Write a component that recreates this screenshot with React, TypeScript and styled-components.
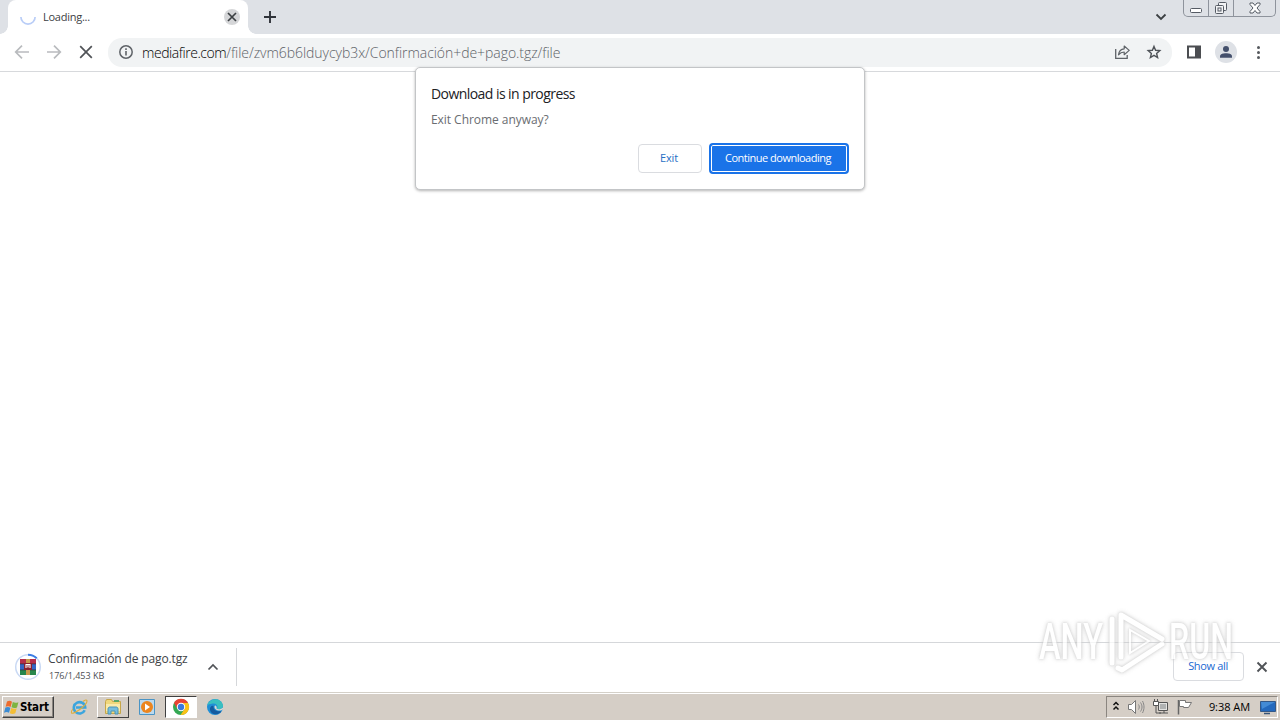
import type { ReactNode } from "react";
import styled, { createGlobalStyle } from "styled-components";

const GlobalStyle = createGlobalStyle`
  * {
    box-sizing: border-box;
  }

  body {
    margin: 0;
    overflow: hidden;
    background: #fff;
    font-family: "Open Sans", "Noto Sans", sans-serif;
  }

  button {
    padding: 0;
    border: 0;
    background: none;
    font-family: inherit;
  }

  svg {
    display: block;
    flex: none;
  }
`;

interface IconProps {
  width?: number;
  height?: number;
  children: ReactNode;
}
const Icon = ({ width = 16, height = 16, children }: IconProps) => (
  <svg
    width={width}
    height={height}
    viewBox={`0 0 ${width} ${height}`}
    fill="none"
    aria-hidden="true"
  >
    {children}
  </svg>
);

const TabStrip = () => (
  <S.TabStrip>
    <S.Tab>
      <Icon>
        <path d="M.9 8a7.1 7.1 0 0 0 14.2 0" stroke="#b9cdf7" strokeWidth="1.7" />
      </Icon>
      <S.TabTitle>Loading...</S.TabTitle>
      <S.TabClose aria-label="Close tab">
        <Icon>
          <path d="M4 4l8 8M12 4l-8 8" stroke="#3c4043" strokeWidth="1.7" />
        </Icon>
      </S.TabClose>
    </S.Tab>
    <S.NewTab aria-label="New tab">
      <Icon>
        <path d="M8 2v12M2 8h12" stroke="#30333a" strokeWidth="1.9" />
      </Icon>
    </S.NewTab>
    <S.TabSearch aria-label="Search tabs">
      <Icon width={12} height={12}>
        <path d="M1.5 3.500l4.5 4.5L10.500 3.500" stroke="#3c4043" strokeWidth="1.8" />
      </Icon>
    </S.TabSearch>
    <S.WindowButtons>
      <S.WindowButton $width={24} aria-label="Minimize">
        <Icon width={14} height={7}>
          <rect x="1.500" y="1.500" width="11" height="4" rx="1" fill="#fff" stroke="#555b64" />
        </Icon>
      </S.WindowButton>
      <S.WindowButton $width={25} aria-label="Restore">
        <Icon width={14} height={14}>
          <rect x="4.500" y="1.500" width="8" height="8" rx="1" fill="#f2f3f5" stroke="#555b64" />
          <rect x="1.500" y="4.500" width="8" height="8" rx="1" fill="#f2f3f5" stroke="#555b64" />
          <rect x="4" y="7" width="3" height="3" stroke="#555b64" />
        </Icon>
      </S.WindowButton>
      <S.WindowButton $width={42} aria-label="Close">
        <Icon width={14} height={12}>
          <path
            d="M2 1h3L7 3.500 9 1h3v1.500L9 6l3 3.500V11H9L7 8.500 5 11H2V9.500L5 6 2 2.500z"
            fill="#fff"
            stroke="#555b64"
          />
        </Icon>
      </S.WindowButton>
    </S.WindowButtons>
  </S.TabStrip>
);

const Toolbar = () => (
  <S.Toolbar>
    <S.NavButtons>
      <Icon>
        <path d="M15 8H2M8 1.700L1.700 8 8 14.300" stroke="#b9bbbe" strokeWidth="1.700" />
      </Icon>
      <Icon>
        <path d="M1 8h13M8 1.700L14.300 8 8 14.300" stroke="#b9bbbe" strokeWidth="1.700" />
      </Icon>
      <Icon>
        <path d="M2.200 2.200l11.600 11.600M13.800 2.200L2.200 13.800" stroke="#505357" strokeWidth="1.700" />
      </Icon>
    </S.NavButtons>
    <S.Omnibox>
      <Icon>
        <circle cx="8" cy="8" r="6.200" stroke="#5f6368" strokeWidth="1.500" />
        <path d="M8 7v4.500M8 4.300V6" stroke="#5f6368" strokeWidth="1.600" />
      </Icon>
      <S.Url>
        <b>mediafire.com</b>/file/zvm6b6lduycyb3x/Confirmación+de+pago.tgz/file
      </S.Url>
      <Icon>
        <path d="M1.700 5v9.300h11.500V11" stroke="#5f6368" strokeWidth="1.300" />
        <path
          d="M4.500 10.800C5 7 7.200 5 10.200 4.800V2l5 4.400-5 4.300V8C7.700 8 6 8.900 4.500 10.800z"
          stroke="#5f6368"
          strokeWidth="1.200"
          strokeLinejoin="round"
        />
      </Icon>
      <Icon>
        <path
          d="M8 2.400l1.600 3.900 4.200.3-3.200 2.800 1 4.100L8 11.300l-3.600 2.200 1-4.100-3.200-2.800 4.200-.3z"
          stroke="#4f5358"
          strokeWidth="1.400"
        />
      </Icon>
    </S.Omnibox>
    <S.SidePanel aria-label="Side panel">
      <Icon>
        <path d="M1 1.500h14v13H1zM3 3.500v9h6v-9z" fill="#4b4d51" fillRule="evenodd" />
      </Icon>
    </S.SidePanel>
    <S.Avatar>
      <Icon>
        <circle cx="8" cy="5" r="3" fill="#44506c" />
        <path d="M2 13.700v-1.400C2 10 5 9.200 8 9.200s6 .8 6 3.100v1.400z" fill="#44506c" />
      </Icon>
    </S.Avatar>
    <Icon>
      <circle cx="8.500" cy="2.500" r="1.500" fill="#55585d" />
      <circle cx="8.500" cy="7.500" r="1.500" fill="#55585d" />
      <circle cx="8.500" cy="12.500" r="1.500" fill="#55585d" />
    </Icon>
  </S.Toolbar>
);

const ExitDialog = () => (
  <S.Dialog role="dialog">
    <S.DialogTitle>Download is in progress</S.DialogTitle>
    <S.DialogText>Exit Chrome anyway?</S.DialogText>
    <S.DialogActions>
      <S.DialogButton>Exit</S.DialogButton>
      <S.DialogButton $primary>Continue downloading</S.DialogButton>
    </S.DialogActions>
  </S.Dialog>
);

const ArchiveIcon = () => (
  <Icon width={28} height={28}>
    <circle cx="14" cy="14" r="12.300" stroke="#c9d9f4" strokeWidth="1.500" />
    <path d="M14 1.700a12.300 12.300 0 0 1 8.700 3.600" stroke="#3c7ce4" strokeWidth="2" />
    <path d="M6 6h16v5H6z" fill="#b52d4b" />
    <path d="M6 11h16v6H6z" fill="#3565c5" />
    <path d="M6 17h16v5H6z" fill="#27864c" />
    <path d="M6 10.900h16M6 16.900h16" stroke="#342b35" strokeWidth=".7" />
    <path d="M12 6h4v16h-4z" fill="#c9984c" />
    <path d="M10 10h8v7h-8z" fill="#8a2131" />
    <path d="M12 15v-3.500h4V15M14 12v2.500" stroke="#fff" strokeWidth="1.100" />
  </Icon>
);

const DownloadShelf = () => (
  <S.Shelf>
    <S.Download>
      <ArchiveIcon />
      <S.FileInfo>
        <S.FileName>Confirmación de pago.tgz</S.FileName>
        <S.FileSize>176/1,453 KB</S.FileSize>
      </S.FileInfo>
      <Icon width={12} height={12}>
        <path d="M1.500 8.500L6 4l4.500 4.500" stroke="#505357" strokeWidth="1.700" />
      </Icon>
    </S.Download>
    <S.ShowAll>Show all</S.ShowAll>
    <Icon width={12} height={12}>
      <path d="M1.500 1.500l9 9M10.500 1.500l-9 9" stroke="#505357" strokeWidth="1.900" />
    </Icon>
  </S.Shelf>
);

const WindowsLogo = () => (
  <Icon width={17} height={17}>
    <path d="M4 2.500c2-1 3.500-.8 5 .2L7.600 8C6 7 4.500 7 2.600 7.800z" fill="#ec6b2d" />
    <path d="M9.800 3.100c2 1 3.600 1 5.600.1L14 8.400c-2 .9-3.700.8-5.500-.1z" fill="#7db442" />
    <path d="M2.400 8.600c1.900-.9 3.400-.7 5 .2L6 13.800c-1.500-.9-3-1.100-5 0z" fill="#3b8bd3" />
    <path d="M8.200 9.100c1.900.9 3.500 1 5.500.2l-1.400 5c-2 .9-3.700.8-5.500-.1z" fill="#f3bd35" />
  </Icon>
);

const Taskbar = () => (
  <S.Taskbar>
    <S.Start>
      <WindowsLogo />
      Start
    </S.Start>
    <S.TaskItem $state="idle" aria-label="Internet Explorer">
      <Icon width={18} height={18}>
        <path d="M14.700 12.200A5.700 5.700 0 1 1 15.200 9.500H6" stroke="#3ba5de" strokeWidth="2.600" />
        <path
          d="M13 3.500c2-1.700 4-2 4-.5.200 2-3.800 6-8 9-4 2.800-7 4-7.600 2.700-.4-.8.400-2.200 1.400-3.500"
          stroke="#dcae3d"
          strokeWidth="1.100"
        />
      </Icon>
    </S.TaskItem>
    <S.TaskItem $state="raised" aria-label="Explorer">
      <Icon width={18} height={18}>
        <path d="M1.500 3.500l1-2h5l1 2h8v12h-15z" fill="#efd77c" stroke="#c7a648" />
        <path d="M2 6h14v7H2z" fill="#f9eaaa" />
        <path d="M4 16v-5c0-1.500 1-2 2-2h6c1 0 2 .5 2 2v5h-3v-3H7v3z" fill="#76bddd" stroke="#4a94b6" />
        <path d="M10 3h5" stroke="#58a667" strokeWidth="2" />
      </Icon>
    </S.TaskItem>
    <S.TaskItem $state="idle" aria-label="Media Player">
      <Icon width={18} height={18}>
        <path d="M1.500 1.500h15v15h-15z" fill="#bcd9ed" stroke="#4a94c5" />
        <circle cx="9" cy="9" r="6" fill="#ec851e" />
        <path d="M7 5.500v7l5-3.500z" fill="#fff" />
      </Icon>
    </S.TaskItem>
    <S.TaskItem $state="active" aria-label="Chrome">
      <Icon width={18} height={18}>
        <circle cx="9" cy="9" r="8" fill="#34a853" />
        <path d="M2 5a8 8 0 0 1 14 0H9l-3.500 6z" fill="#e84335" />
        <path d="M16 5a8 8 0 0 1-7.500 12l4-6V7L9 5z" fill="#fbc116" />
        <circle cx="9" cy="9" r="4.200" fill="#fff" />
        <circle cx="9" cy="9" r="3.200" fill="#3979dd" />
      </Icon>
    </S.TaskItem>
    <S.TaskItem $state="idle" aria-label="Edge">
      <Icon width={18} height={18}>
        <circle cx="9" cy="9" r="8" fill="#1f8ed6" />
        <path d="M1.200 7.500C3 0 14.500-1.500 17 7c.5 4-4 5-6.200 3.800 2-2.300-.4-6-4.200-5.300C4 6 2 6.500 1.200 7.500z" fill="#39bfc0" />
        <path d="M7.500 8C7 11.500 10 14 15.500 13.200 12 18 5 17 4 12c-.5-2.500 1.500-4.700 3.500-4z" fill="#155a9f" />
        <path d="M9 7.500c-1.300 1.500 0 4.500 3.500 5 2.200.2 3.400-.4 4.500-1.200V9.500C15 11.500 12 11.700 10.500 10.500 11.200 9.500 10.500 7.500 9 7.500z" fill="#d9d8d3" />
      </Icon>
    </S.TaskItem>
    <S.Tray>
      <Icon width={8} height={14}>
        <path d="M1.500 5L4 2.500 6.500 5M1.500 9.500L4 7l2.500 2.500" stroke="#111" strokeWidth="1.500" />
      </Icon>
      <Icon width={18} height={16}>
        <path d="M1.500 5.500h3l4-4v13l-4-4h-3z" fill="#fff" stroke="#777" />
        <path d="M11.500 5.500c1 1.700 1 3.300 0 5M13.500 3.500c2 3 2 6 0 9M15.500 2c2 4 2 8 0 12" stroke="#888" />
      </Icon>
      <Icon width={17} height={16}>
        <path d="M6.500 3.500h9v8h-9z" fill="#e3e3e1" stroke="#555" />
        <path d="M8 5h6v5H8z" fill="#b0b2b2" />
        <path d="M7 14h9M12 12v2M4 7v7h5" stroke="#555" />
        <path d="M1.500 2.500h5v4h-5zM2.500 0v2M5.500 0v2" fill="#fff" stroke="#555" />
      </Icon>
      <Icon width={17} height={16}>
        <path d="M2.500 1v14.500" stroke="#666" strokeWidth="1.500" />
        <path d="M3.500 1.500h6v2h6l-3 5h-5v-1h-4z" fill="#fff" stroke="#777" />
      </Icon>
      <S.Clock>9:38 AM</S.Clock>
      <Icon width={17} height={15}>
        <path d="M1.500 1.500h15v10h-15z" fill="#2469bd" stroke="#345887" />
        <path d="M2 2h14L3 9z" fill="#448bd5" />
        <path d="M5 13.500h6" stroke="#365377" strokeWidth="1.500" />
      </Icon>
    </S.Tray>
  </S.Taskbar>
);

const Watermark = () => (
  <S.Watermark>
    <svg width="206" height="76" viewBox="0 0 206 76" fill="none">
      <g fill="#fff">
        <text x="5" y="52" textLength="64" lengthAdjust="spacingAndGlyphs">
          ANY
        </text>
        <text x="135" y="52" textLength="64" lengthAdjust="spacingAndGlyphs">
          RUN
        </text>
      </g>
      <g stroke="#fff" strokeWidth="5" strokeLinecap="round" strokeLinejoin="round">
        <path d="M78 12v44" />
        <path d="M87 50V8l41 24" />
        <path d="M84 61l4 2 40-26" />
      </g>
      <path d="M96 23v23l19-12z" stroke="#fff" strokeWidth="2" />
    </svg>
  </S.Watermark>
);

const App = () => (
  <S.Desktop>
    <GlobalStyle />
    <TabStrip />
    <Toolbar />
    <S.Page />
    <DownloadShelf />
    <Taskbar />
    <ExitDialog />
    <Watermark />
  </S.Desktop>
);

namespace S {
  export const Desktop = styled.div`
    position: relative;
    display: flex;
    flex-direction: column;
    width: 1280px;
    height: 720px;
    overflow: hidden;
    background: #fff;
    white-space: nowrap;
  `;

  export const TabStrip = styled.div`
    display: flex;
    height: 34px;
    padding-left: 8px;
    background: #dee1e6;
  `;

  export const Tab = styled.div`
    position: relative;
    display: flex;
    align-items: center;
    width: 240px;
    padding: 0 8px 0 12px;
    border-radius: 8px 8px 0 0;
    background: #fff;

    &::before,
    &::after {
      content: "";
      position: absolute;
      bottom: 0;
      width: 8px;
      height: 8px;
    }

    &::before {
      left: -8px;
      background: radial-gradient(circle at 0 0, #dee1e6 7.5px, #fff 8px);
    }

    &::after {
      right: -8px;
      background: radial-gradient(circle at 100% 0, #dee1e6 7.5px, #fff 8px);
    }
  `;

  export const TabTitle = styled.span`
    margin-left: 7px;
    padding-bottom: 2px;
    color: #3c4043;
    font-size: 11px;
    letter-spacing: -0.25px;
  `;

  export const TabClose = styled.button`
    margin-left: auto;
    border-radius: 50%;
    background: #d5d6d8;
  `;

  export const NewTab = styled.button`
    margin-left: 14px;
  `;

  export const TabSearch = styled.button`
    margin-left: auto;
    margin-right: 16px;
  `;

  export const WindowButtons = styled.div`
    display: flex;
    height: 17px;
    margin-right: 4px;
    border: 1px solid #8e939c;
    border-top: 0;
    border-radius: 0 0 5px 5px;
  `;

  export const WindowButton = styled.button<{ $width: number }>`
    display: flex;
    align-items: center;
    justify-content: center;
    width: ${(props) => props.$width}px;

    & + & {
      border-left: 1px solid #8e939c;
    }

    &:first-child {
      padding-top: 5px;
    }
  `;

  export const Toolbar = styled.div`
    display: flex;
    align-items: center;
    height: 38px;
    padding: 0 14px;
    border-bottom: 1px solid #d7d9dc;
    background: #fff;
  `;

  export const NavButtons = styled.div`
    display: flex;
    gap: 16px;
    padding-bottom: 1px;
  `;

  export const Omnibox = styled.div`
    display: flex;
    flex: 1;
    align-items: center;
    gap: 16px;
    height: 29px;
    margin-left: 14px;
    padding: 0 10px 1px;
    border-radius: 14px;
    background: #f1f3f4;
  `;

  export const Url = styled.span`
    flex: 1;
    margin-left: -8px;
    color: #5d6267;
    font-size: 14px;
    font-weight: 300;
    letter-spacing: -0.05px;

    b {
      color: #000;
      font-weight: 300;
      letter-spacing: -0.45px;
    }
  `;

  export const SidePanel = styled.button`
    margin: 0 13px 0 14px;
    padding-bottom: 1px;
  `;

  export const Avatar = styled.span`
    display: flex;
    align-items: center;
    justify-content: center;
    width: 22px;
    height: 22px;
    margin: 0 13px 1px 0;
    border-radius: 50%;
    background: #dee1e6;
  `;

  export const Page = styled.main`
    flex: 1;
    background: #fff;
  `;

  export const Dialog = styled.section`
    position: absolute;
    top: 67px;
    left: 415px;
    width: 450px;
    height: 123px;
    padding: 17px 16px 0;
    border: 1px solid #c3c5c7;
    border-radius: 5px;
    background: #fff;
    box-shadow: 0 1px 3px rgba(0, 0, 0, 0.3);
  `;

  export const DialogTitle = styled.h1`
    margin: 0 0 0 -1px;
    color: #202124;
    font-size: 14px;
    font-weight: 400;
    line-height: 18px;
    letter-spacing: -0.56px;
  `;

  export const DialogText = styled.p`
    margin: 8px 0 15px -1px;
    color: #6a6d71;
    font-size: 12px;
    line-height: 17px;
    letter-spacing: -0.05px;
  `;

  export const DialogActions = styled.div`
    display: flex;
    align-items: center;
    justify-content: flex-end;
    gap: 7px;
    height: 31px;
    margin-right: -1px;
  `;

  export const DialogButton = styled.button<{ $primary?: boolean }>`
    width: ${(props) => (props.$primary ? "140px" : "64px")};
    height: ${(props) => (props.$primary ? "31px" : "29px")};
    padding: 0 2px 2px 0;
    border: ${(props) =>
      props.$primary ? "2px solid #1a73e8" : "1px solid #dadce0"};
    border-radius: 4px;
    background: ${(props) => (props.$primary ? "#1a73e8" : "#fff")};
    box-shadow: ${(props) => (props.$primary ? "inset 0 0 0 1px #fff" : "none")};
    color: ${(props) => (props.$primary ? "#fff" : "#286fc4")};
    font-size: 11px;
    letter-spacing: ${(props) => (props.$primary ? "-0.5px" : "-0.2px")};
  `;

  export const Shelf = styled.footer`
    display: flex;
    align-items: center;
    height: 50px;
    padding: 0 12px 2px 0;
    border-top: 1px solid #d5d7da;
    background: #fff;
  `;

  export const Download = styled.div`
    display: flex;
    align-items: center;
    width: 237px;
    height: 38px;
    padding: 0 17px 0 14px;
    border-right: 1px solid #d5d7da;
  `;

  export const FileInfo = styled.div`
    display: flex;
    flex: 1;
    flex-direction: column;
    margin-left: 6px;
  `;

  export const FileName = styled.span`
    color: #404347;
    font-size: 12px;
    line-height: 17px;
    letter-spacing: -0.14px;
  `;

  export const FileSize = styled.span`
    padding-left: 1px;
    color: #4c4f53;
    font-size: 9px;
    line-height: 17px;
  `;

  export const ShowAll = styled.button`
    width: 71px;
    height: 29px;
    margin: 0 12px 0 auto;
    padding: 0 1px 3px 0;
    border: 1px solid #dadce0;
    border-radius: 4px;
    color: #1a68d1;
    font-size: 11px;
    letter-spacing: -0.35px;
  `;

  export const Taskbar = styled.div`
    display: flex;
    align-items: center;
    height: 28px;
    padding: 2px 2px 1px;
    border-top: 1px solid #d4d0c8;
    box-shadow: inset 0 1px #fff;
    background: #d5cec6;
  `;

  export const Start = styled.button`
    display: flex;
    align-items: center;
    width: 52px;
    height: 22px;
    margin-right: 8px;
    border: 1px solid;
    border-color: #fff #404040 #404040 #fff;
    box-shadow: inset -1px -1px #8b8680;
    color: #000;
    font-family: "DejaVu Sans Condensed", "DejaVu Sans", sans-serif;
    font-size: 11.5px;
    font-weight: 700;
    letter-spacing: -0.15px;
  `;

  export const TaskItem = styled.button<{ $state: "idle" | "raised" | "active" }>`
    display: flex;
    align-items: center;
    justify-content: center;
    width: 32px;
    height: 22px;
    margin: 0 1px;
    border: 1px solid transparent;
    border-color: ${(props) =>
      ({
        idle: "transparent",
        raised: "#fff #404040 #404040 #fff",
        active: "#404040 #fff #fff #404040",
      })[props.$state]};
    background: ${(props) => (props.$state === "active" ? "#fff" : "none")};
  `;

  export const Tray = styled.div`
    display: flex;
    align-items: center;
    gap: 7px;
    width: 172px;
    height: 22px;
    margin-left: auto;
    padding: 0 1px 0 5px;
    border: 1px solid;
    border-color: #8b8680 #fff #fff #8b8680;
  `;

  export const Clock = styled.span`
    flex: 1;
    padding: 0 2px 1px 0;
    color: #000;
    font-size: 11px;
    text-align: right;
    letter-spacing: -0.05px;
  `;

  export const Watermark = styled.div`
    position: absolute;
    top: 607px;
    left: 1034px;
    opacity: 0.75;
    filter: drop-shadow(0 0 1px #c8c8c8) drop-shadow(0 0 2px #ccc);
    pointer-events: none;

    text {
      font-family: Roboto, sans-serif;
      font-size: 50px;
      font-weight: 500;
    }
  `;
}

export default App;
